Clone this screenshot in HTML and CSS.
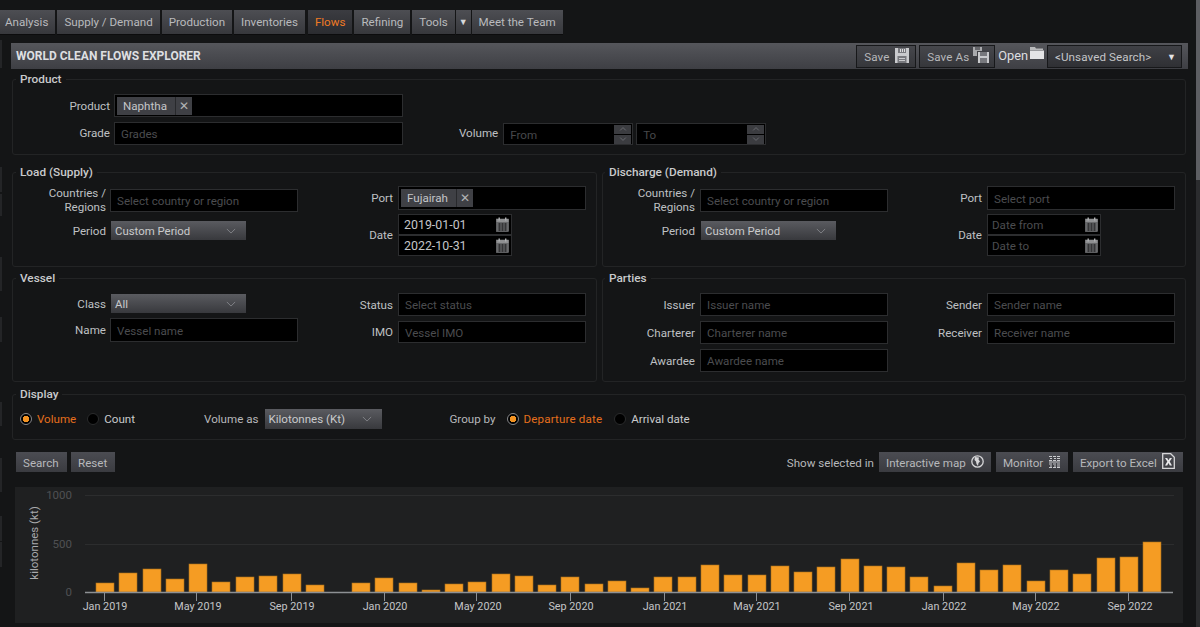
FILE: index.html
```html
<!DOCTYPE html>
<html lang="en">
<head>
<meta charset="utf-8">
<title>World Clean Flows Explorer</title>
<link rel="stylesheet" href="styles.css">
</head>
<body>
<svg class="defs" width="0" height="0" aria-hidden="true">
  <symbol id="cal" viewBox="0 0 13 15">
    <rect x="0.5" y="2" width="12" height="12.5" fill="#68696b" stroke="#7c7d7f" stroke-width="0.6"/>
    <rect x="0.5" y="2" width="12" height="3" fill="#8f9092"/>
    <rect x="2.5" y="0.5" width="1.4" height="3" fill="#b0b1b3"/>
    <rect x="9" y="0.5" width="1.4" height="3" fill="#b0b1b3"/>
    <path d="M2 7h9M2 9h9M2 11h9M2 13h9M3.5 6v8M6.5 6v8M9.5 6v8" stroke="#2e2e30" stroke-width="0.8" fill="none"/>
  </symbol>
  <symbol id="chev" viewBox="0 0 12 7">
    <path d="M1 1l5 5 5-5" fill="none" stroke="#8a8b90" stroke-width="1"/>
  </symbol>
  <symbol id="chevup" viewBox="0 0 12 7">
    <path d="M1 6l5-5 5 5" fill="none" stroke="#8a8b90" stroke-width="1"/>
  </symbol>
</svg>
<div class="rail"></div>
<div class="page">
  <main class="main">
    <nav class="nav">
      <a class="tab tab-analysis">Analysis</a>
      <a class="tab">Supply / Demand</a>
      <a class="tab">Production</a>
      <a class="tab">Inventories</a>
      <a class="tab tab-active">Flows</a>
      <a class="tab">Refining</a>
      <a class="tab tab-tools">Tools</a>
      <a class="tab tab-caret">▼</a>
      <a class="tab">Meet the Team</a>
    </nav>

    <section class="panel">
      <header class="head">
        <h1 class="title">WORLD CLEAN FLOWS EXPLORER</h1>
        <div class="head-tools">
          <button class="hbtn hbtn-save">Save
            <svg class="ico-head" width="14" height="15" viewBox="0 0 14 15"><path d="M0 0h14v15H0z" fill="#c9cacd"/><path d="M3 0h8v5H3z" fill="#77787d"/><path d="M5 1h1v3H5zM7 1h1v3H7zM9 1h1v3H9z" fill="#dcdcde"/><path d="M2.5 8h9v7h-9z" fill="#77787d"/><path d="M4 10h6v1H4zM4 12h6v1H4z" fill="#c9cacd"/></svg>
          </button>
          <button class="hbtn hbtn-saveas">Save As
            <svg class="ico-head" width="16" height="16" viewBox="0 0 16 16"><path d="M0 0h9v9H0z" fill="#a8a9ac"/><path d="M2 0h5v3H2z" fill="#66676b"/><path d="M4 4h12v12H4z" fill="#3f4044"/><path d="M5 5h11v11H5z" fill="#c9cacd"/><path d="M7 5h7v4H7z" fill="#77787d"/><path d="M7 11h7v5H7z" fill="#77787d"/></svg>
          </button>
          <span class="open">Open
            <svg class="ico-open" width="14" height="13" viewBox="0 0 14 13"><path d="M0 1h5l1 1.500h7V4H0z" fill="#b9babc"/><path d="M0 4.500h14V13H0z" fill="#e4e4e6"/></svg>
          </span>
          <div class="saved">&lt;Unsaved Search&gt;<span class="saved-caret">▼</span></div>
        </div>
      </header>

      <fieldset class="fs fs-product">
        <legend>Product</legend>
        <div class="product-body">
          <div class="stack stack-product">
            <div class="row">
              <span class="lbl lbl-product">Product</span>
              <div class="input input-product h23"><span class="chip">Naphtha</span><span class="chip-x">✕</span></div>
            </div>
            <div class="row">
              <span class="lbl lbl-product lbl-up">Grade</span>
              <div class="input input-product h23 ph">Grades</div>
            </div>
          </div>
          <div class="volume">
            <span class="lbl lbl-volume">Volume</span>
            <div class="spin"><span class="spin-text">From</span>
              <span class="spin-btns"><i class="sb"><svg class="sb-ico"><use href="#chevup"/></svg></i><i class="sb"><svg class="sb-ico"><use href="#chev"/></svg></i></span></div>
            <div class="spin"><span class="spin-text">To</span>
              <span class="spin-btns"><i class="sb"><svg class="sb-ico"><use href="#chevup"/></svg></i><i class="sb"><svg class="sb-ico"><use href="#chev"/></svg></i></span></div>
          </div>
        </div>
      </fieldset>

      <div class="two two-loads">
        <fieldset class="fs">
          <legend>Load (Supply)</legend>
          <div class="body">
            <div class="col col-left top7">
              <div class="row row-top">
                <span class="lbl lbl-left">Countries /<br>Regions</span>
                <div class="input input-wide h23 ph">Select country or region</div>
              </div>
              <div class="row">
                <span class="lbl lbl-left">Period</span>
                <div class="select select-period">Custom Period<svg class="chev"><use href="#chev"/></svg></div>
              </div>
            </div>
            <div class="col col-right top7">
              <div class="row">
                <span class="lbl lbl-right">Port</span>
                <div class="input input-wide h24"><span class="chip chip-fuj">Fujairah</span><span class="chip-x">✕</span></div>
              </div>
              <div class="row">
                <span class="lbl lbl-right">Date</span>
                <div class="dates">
                  <div class="date">2019-01-01<svg class="cal"><use href="#cal"/></svg></div>
                  <div class="date">2022-10-31<svg class="cal"><use href="#cal"/></svg></div>
                </div>
              </div>
            </div>
          </div>
        </fieldset>

        <fieldset class="fs fs-r">
          <legend>Discharge (Demand)</legend>
          <div class="body">
            <div class="col col-left top7">
              <div class="row row-top">
                <span class="lbl lbl-left">Countries /<br>Regions</span>
                <div class="input input-wide h23 ph">Select country or region</div>
              </div>
              <div class="row">
                <span class="lbl lbl-left">Period</span>
                <div class="select select-period">Custom Period<svg class="chev"><use href="#chev"/></svg></div>
              </div>
            </div>
            <div class="col col-right top7">
              <div class="row">
                <span class="lbl lbl-right">Port</span>
                <div class="input input-wide h24 ph">Select port</div>
              </div>
              <div class="row">
                <span class="lbl lbl-right">Date</span>
                <div class="dates">
                  <div class="date ph">Date from<svg class="cal"><use href="#cal"/></svg></div>
                  <div class="date ph">Date to<svg class="cal"><use href="#cal"/></svg></div>
                </div>
              </div>
            </div>
          </div>
        </fieldset>
      </div>

      <div class="two two-vessel">
        <fieldset class="fs">
          <legend>Vessel</legend>
          <div class="body">
            <div class="col col-left top9 gap5">
              <div class="row">
                <span class="lbl lbl-left">Class</span>
                <div class="select select-period">All<svg class="chev"><use href="#chev"/></svg></div>
              </div>
              <div class="row">
                <span class="lbl lbl-left">Name</span>
                <div class="input input-wide h24 ph">Vessel name</div>
              </div>
            </div>
            <div class="col col-right top8 gap5">
              <div class="row">
                <span class="lbl lbl-right">Status</span>
                <div class="input input-wide h23 ph">Select status</div>
              </div>
              <div class="row">
                <span class="lbl lbl-right">IMO</span>
                <div class="input input-wide h22 ph">Vessel IMO</div>
              </div>
            </div>
          </div>
        </fieldset>

        <fieldset class="fs fs-r">
          <legend>Parties</legend>
          <div class="body">
            <div class="col col-left top8 gap5">
              <div class="row">
                <span class="lbl lbl-left">Issuer</span>
                <div class="input input-wide h23 ph">Issuer name</div>
              </div>
              <div class="row">
                <span class="lbl lbl-left">Charterer</span>
                <div class="input input-wide h23 ph">Charterer name</div>
              </div>
              <div class="row">
                <span class="lbl lbl-left">Awardee</span>
                <div class="input input-wide h23 ph">Awardee name</div>
              </div>
            </div>
            <div class="col col-right top8 gap5">
              <div class="row">
                <span class="lbl lbl-right">Sender</span>
                <div class="input input-wide h23 ph">Sender name</div>
              </div>
              <div class="row">
                <span class="lbl lbl-right">Receiver</span>
                <div class="input input-wide h23 ph">Receiver name</div>
              </div>
            </div>
          </div>
        </fieldset>
      </div>

      <fieldset class="fs fs-display">
        <legend>Display</legend>
        <div class="display">
          <span class="radio on"></span><span class="rtext on-text rt-volume">Volume</span>
          <span class="radio"></span><span class="rtext rt-count">Count</span>
          <span class="dlabel">Volume as</span>
          <div class="select select-unit">Kilotonnes (Kt)<svg class="chev"><use href="#chev"/></svg></div>
          <span class="dlabel dlabel-group">Group by</span>
          <span class="radio on"></span><span class="rtext on-text rt-dep">Departure date</span>
          <span class="radio"></span><span class="rtext">Arrival date</span>
        </div>
      </fieldset>

      <div class="actions">
        <div class="actions-left">
          <button class="btn btn-search">Search</button>
          <button class="btn btn-reset">Reset</button>
        </div>
        <div class="actions-right">
          <span class="show">Show selected in</span>
          <button class="btn btn-map">Interactive map
            <svg class="ico" width="13" height="13" viewBox="0 0 13 13"><circle cx="6.500" cy="6.500" r="5.700" fill="none" stroke="#d6d6d8" stroke-width="1.300"/><path d="M4 2l4 .5-.5 2L9 6.500 7.500 8l-.5 3L5.500 9 5 6.500 3.500 5z" fill="#d6d6d8"/></svg>
          </button>
          <button class="btn btn-monitor">Monitor
            <svg class="ico" width="11" height="12" viewBox="0 0 11 12"><path d="M0 0h3v1H0zM4 0h3v1H4zM8 0h3v1H8zM1 2h2v1H1zM5 2h2v1H5zM8 2h3v1H8zM0 4h3v1H0zM4 4h3v1H4zM8 4h3v1H8zM0 5.500h11v1H0zM0 7.500h3v1H0zM4 7.500h3v1H4zM8 7.500h3v1H8zM1 9.500h2v1H1zM5 9.500h2v1H5zM8 9.500h3v1H8zM0 11h3v1H0zM4 11h3v1H4zM8 11h3v1H8z" fill="#c9cacd"/></svg>
          </button>
          <button class="btn btn-excel">Export to Excel
            <svg class="ico ico-x" width="13" height="16" viewBox="0 0 13 16"><path d="M.7.700h8l3.600 3.600v11H.7z" fill="none" stroke="#d6d6d8" stroke-width="1.300"/><path d="M3 5h2.200L6.500 7.300 7.800 5H10L7.700 8.500 10 12.500H7.800L6.500 10l-1.300 2.500H3l2.300-4z" fill="#e8e8ea"/></svg>
          </button>
        </div>
      </div>

      <div class="chart">
        <svg class="chart-svg" width="1168" height="136" viewBox="0 0 1168 136">
          <g class="grid">
            <path d="M70 8.500H1159M70 57.500H1159"/>
          </g>
          <text class="ylab" x="57" y="12">1000</text>
          <text class="ylab" x="57" y="61">500</text>
          <text class="ylab" x="57" y="109">0</text>
          <text class="ytitle" transform="translate(23 56) rotate(-90)">kilotonnes (kt)</text>
          <g class="bars">
            <rect x="81" y="96" width="18" height="9"/>
            <rect x="104" y="86" width="18" height="19"/>
            <rect x="128" y="82" width="18" height="23"/>
            <rect x="151" y="92" width="18" height="13"/>
            <rect x="174" y="77" width="18" height="28"/>
            <rect x="197" y="95" width="18" height="10"/>
            <rect x="221" y="90" width="18" height="15"/>
            <rect x="244" y="89" width="18" height="16"/>
            <rect x="268" y="87" width="18" height="18"/>
            <rect x="291" y="98" width="18" height="7"/>
            <rect x="337" y="96" width="18" height="9"/>
            <rect x="360" y="91" width="18" height="14"/>
            <rect x="384" y="96" width="18" height="9"/>
            <rect x="407" y="103" width="18" height="2"/>
            <rect x="430" y="97" width="18" height="8"/>
            <rect x="453" y="95" width="18" height="10"/>
            <rect x="477" y="87" width="18" height="18"/>
            <rect x="500" y="89" width="18" height="16"/>
            <rect x="523" y="98" width="18" height="7"/>
            <rect x="546" y="90" width="18" height="15"/>
            <rect x="570" y="97" width="18" height="8"/>
            <rect x="593" y="94" width="18" height="11"/>
            <rect x="616" y="101" width="18" height="4"/>
            <rect x="639" y="90" width="18" height="15"/>
            <rect x="663" y="90" width="18" height="15"/>
            <rect x="686" y="78" width="18" height="27"/>
            <rect x="709" y="88" width="18" height="17"/>
            <rect x="733" y="88" width="18" height="17"/>
            <rect x="756" y="79" width="18" height="26"/>
            <rect x="779" y="85" width="18" height="20"/>
            <rect x="802" y="80" width="18" height="25"/>
            <rect x="826" y="72" width="18" height="33"/>
            <rect x="849" y="79" width="18" height="26"/>
            <rect x="872" y="80" width="18" height="25"/>
            <rect x="895" y="90" width="18" height="15"/>
            <rect x="919" y="99" width="18" height="6"/>
            <rect x="942" y="76" width="18" height="29"/>
            <rect x="965" y="83" width="18" height="22"/>
            <rect x="988" y="78" width="18" height="27"/>
            <rect x="1012" y="94" width="18" height="11"/>
            <rect x="1035" y="83" width="18" height="22"/>
            <rect x="1058" y="87" width="18" height="18"/>
            <rect x="1082" y="71" width="18" height="34"/>
            <rect x="1105" y="70" width="18" height="35"/>
            <rect x="1128" y="55" width="18" height="50"/>
          </g>
          <path class="axis" d="M70 105.500H1158"/>
          <path class="ticks" d="M89.500 106v8M181.500 106v8M276.500 106v8M369.500 106v8M461.500 106v8M555.500 106v8M649.500 106v8M741.500 106v8M834.500 106v8M928.500 106v8M1020.500 106v8M1113.500 106v8"/>
          <g class="xlab">
            <text x="90" y="123">Jan 2019</text>
            <text x="183" y="123">May 2019</text>
            <text x="277" y="123">Sep 2019</text>
            <text x="370" y="123">Jan 2020</text>
            <text x="463" y="123">May 2020</text>
            <text x="556" y="123">Sep 2020</text>
            <text x="650" y="123">Jan 2021</text>
            <text x="742" y="123">May 2021</text>
            <text x="836" y="123">Sep 2021</text>
            <text x="929" y="123">Jan 2022</text>
            <text x="1021" y="123">May 2022</text>
            <text x="1115" y="123">Sep 2022</text>
          </g>
        </svg>
      </div>
    </section>
  </main>
  <aside class="scrollbar"><div class="thumb"></div></aside>
</div>
</body>
</html>
```
FILE: styles.css
```css
* { box-sizing: border-box; }
html, body { margin: 0; height: 100%; overflow: hidden; }
body {
  background: #141516;
  color: #c4c5c8;
  font: 11.600px/14px Roboto, "Liberation Sans", sans-serif;
}
.defs { position: absolute; }
.rail {
  position: absolute; left: 0; top: 0; width: 2px; height: 627px;
  background: linear-gradient(to bottom,
    transparent 40px, #242527 40px 68px, transparent 68px 167px,
    #242527 167px 192px, transparent 192px 194px, #242527 194px 216px, transparent 216px 257px,
    #242527 257px 291px, transparent 291px 317px, #242527 317px 342px, transparent 342px 402px,
    #242527 402px 426px, transparent 426px 458px, #242527 458px 492px, transparent 492px 516px,
    #242527 516px 541px, transparent 541px 542px, #242527 542px 567px, transparent 567px);
}
.page { display: flex; height: 627px; }
.main { flex: 1; min-width: 0; padding-top: 10px; }
.scrollbar { width: 4px; background: #2b2c2e; }
.thumb { height: 180px; background: #5d5e62; }

/* nav */
.nav { display: flex; height: 25px; gap: 2px; }
.tab {
  display: flex; align-items: center; padding: 0 7px;
  background: linear-gradient(#4d4e53, #37383c);
  color: #b9babd; border-bottom: 1px solid #0c0c0d;
}
.tab-analysis { padding-left: 5px; padding-right: 7px; }
.tab-active { margin-left: 1px; background: linear-gradient(#3b3c41, #2b2c30); color: #f07a24; }
.tab-tools { margin-right: -1px; }
.tab-caret { padding: 0 3px; font-size: 9px; color: #d8d8da; margin-right: -1px; }

/* panel */
.panel { margin: 8px 0 0 11px; width: 1177px; padding: 0 2px 0 1px; }
.head {
  display: flex; align-items: center; justify-content: space-between;
  height: 26px; margin: 0 -2px 3px -1px; padding: 0 6px 0 5px;
  background: linear-gradient(#55565b, #3e3f44);
}
.title { margin: 0; font-size: 12px; font-weight: 700; color: #dedfe1; }
.head-tools { display: flex; align-items: center; gap: 3px; }
.hbtn {
  display: flex; align-items: center; gap: 5px; height: 23px; padding: 2px 0 0 7px;
  background: linear-gradient(#46474c, #36373b); border: 1px solid #17181a;
  color: #b7b8bb; font: inherit; white-space: nowrap; letter-spacing: .15px;
}
.hbtn-save { width: 60px; }
.hbtn-saveas { width: 76px; gap: 4px; }
.ico-head { margin-top: -4px; flex: none; }
.open { display: flex; align-items: flex-start; gap: 2px; color: #dddee0; margin-top: -1px; font-size: 12.800px; }
.ico-open { margin-top: -3px; }
.saved {
  display: flex; align-items: center; justify-content: space-between;
  width: 135px; height: 23px; padding: 2px 5px 0 7px;
  background: linear-gradient(#3f4045, #2f3034); border: 1px solid #17181a; color: #c4c5c8; letter-spacing: .1px;
}
.saved-caret { font-size: 9px; color: #e4e4e6; }

/* fieldsets */
.fs {
  margin: 0; padding: 0; min-width: 0;
  border: 1px solid #232425; border-radius: 3px;
}
.fs legend {
  margin-left: 3px; padding: 0 4px; height: 14px; line-height: 14px;
  font-weight: 500; font-size: 11.800px; color: #c9cacc;
}
.fs-r legend { margin-left: 2px; }
.fs-product { height: 83px; }
.two { display: grid; grid-template-columns: 585px 584px; gap: 5px; }
.two-loads { margin-top: 10px; }
.two-loads .fs { height: 102px; }
.two-vessel { margin-top: 4px; }
.two-vessel .fs { height: 111px; }
.fs-display { margin-top: 5px; height: 53px; }

.product-body { display: flex; align-items: flex-start; }
.stack-product { display: flex; flex-direction: column; gap: 5px; margin-top: 8px; }
.lbl-product { width: 97px; }
.lbl-up { margin-top: -2px; }
.input-product { width: 289px; }
.volume { display: flex; align-items: center; gap: 3px; margin: 37px 0 0 56px; }
.lbl-volume { margin: -3px 2px 0 0; }
.spin {
  display: flex; align-items: center; justify-content: space-between;
  width: 130px; height: 22px; padding: 0 1px 0 6px;
  background: #000; border: 1px solid #2c2d2f; color: #47484b;
}
.spin-text { padding-top: 1px; }
.spin-btns { display: flex; flex-direction: column; gap: 1px; }
.sb {
  display: flex; align-items: center; justify-content: center;
  width: 17px; height: 9px; background: #3b3c40;
}
.sb-ico { width: 8px; height: 4px; }

.body { display: flex; align-items: flex-start; }
.col { display: flex; flex-direction: column; }
.col-left { width: 286px; }
.col-right { margin-left: 48px; gap: 4px; }
.fs-r .col-right { margin-left: 47px; }
.top7 { margin-top: 7px; }
.top8 { margin-top: 8px; }
.top9 { margin-top: 9px; }
.gap5 { gap: 5px; }

.row { display: flex; align-items: center; gap: 4px; }
.row-top { align-items: flex-start; margin-bottom: 7px; }
.row-top .input { margin-top: 3px; }
.lbl { text-align: right; color: #bfc0c3; flex: none; }
.lbl-left { width: 93px; }
.fs-r .lbl-left { width: 92px; margin-right: 1px; }
.lbl-right { width: 46px; margin-right: 1px; }

.input {
  display: flex; align-items: center; padding: 0 6px;
  background: #000; border: 1px solid #2c2d2f; color: #c4c5c8;
}
.input-wide { width: 188px; }
.h22 { height: 22px; }
.h23 { height: 23px; }
.h24 { height: 24px; }
.input.ph { color: #4b4c4f; padding-top: 1px; }
.input .chip, .input .chip-x { height: 18px; background: #3f4045; display: flex; align-items: center; }
.input:has(.chip) { padding: 0 2px; }
.chip { padding: 0 8px 0 6px; color: #c4c5c8; border-right: 1px solid #28292c; }
.chip-x { width: 16px; justify-content: center; font-size: 12px; color: #b2b3b6; }

.select {
  display: flex; align-items: center; justify-content: space-between;
  height: 19px; padding: 0 10px 0 4px;
  background: linear-gradient(#5a5b60, #38393d); color: #c9cacc;
}
.select-period { width: 135px; margin-left: 1px; font-size: 11.400px; }
.select-unit { width: 117px; height: 20px; padding-left: 3px; }
.chev { width: 10px; height: 6px; flex: none; }

.dates { display: flex; flex-direction: column; }
.date {
  display: flex; align-items: center; justify-content: space-between;
  width: 114px; height: 21px; padding: 0 2px 0 5px;
  background: #000; border: 1px solid #2c2d2f; color: #c4c5c8; font-size: 12.400px;
}
.fs-r .date { padding-left: 4px; }
.date.ph { color: #4b4c4f; font-size: 11.600px; }
.cal { width: 13px; height: 15px; flex: none; }

/* display */
.display { display: flex; align-items: center; margin-top: 8px; padding-left: 7px; height: 20px; }
.radio {
  width: 12px; height: 12px; border-radius: 50%; flex: none;
  background: #000; border: 1px solid #2a2b2c; margin-right: 5px;
}
.radio.on { border: 1px solid #85868a; background: radial-gradient(circle, #f39322 0 3px, #000 3.500px); }
.rtext { color: #c9cacc; }
.on-text { color: #e56f1d; }
.rt-volume { margin-right: 11px; }
.rt-count { margin-right: 69px; }
.dlabel { margin-right: 7px; color: #b7b8bb; }
.dlabel-group { margin: 0 11px 0 67px; }
.rt-dep { margin-right: 12px; letter-spacing: .15px; }

/* actions */
.actions { display: flex; justify-content: space-between; margin-top: 12px; height: 20px; padding: 0 3px 0 4px; }
.actions-left, .actions-right { display: flex; align-items: center; gap: 4px; }
.btn {
  display: flex; align-items: center; justify-content: space-between; height: 20px; padding: 1px 8px 0 7px;
  background: linear-gradient(#4b4c52, #3a3b40); border: 0;
  color: #b7b8bb; font: inherit; white-space: nowrap;
}
.btn-search { width: 51px; }
.btn-reset { width: 44px; }
.btn-map { width: 112px; padding-right: 7px; }
.btn-monitor { width: 72px; }
.btn-excel { width: 110px; }
.actions-right .btn { margin-left: 1px; }
.ico { margin-top: -2px; flex: none; }
.ico-x { margin-top: -3px; }
.show { color: #b7b8bb; padding-top: 2px; }

/* chart */
.chart { margin: 15px 0 0 3px; width: 1168px; height: 136px; background: #1f2021; }
.chart-svg { display: block; }
.grid path { stroke: #2c2d2e; fill: none; }
.ylab { fill: #4f5053; font-size: 11.500px; text-anchor: end; }
.ytitle { fill: #a9aaad; font-size: 11.500px; text-anchor: middle; }
.bars rect { fill: #f59c23; stroke: #a8701c; stroke-width: .6; }
.axis { stroke: #8d9094; stroke-width: 1.500; fill: none; }
.ticks { stroke: #8d9094; fill: none; }
.xlab text { fill: #c4c5c8; font-size: 10.800px; text-anchor: middle; }
```
